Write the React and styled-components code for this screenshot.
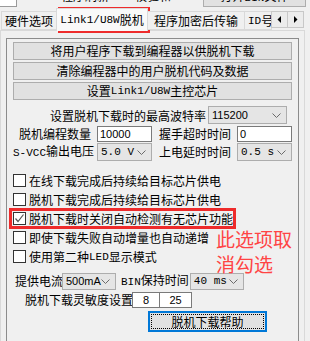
import React from 'react';
import styled, { createGlobalStyle } from 'styled-components';

const Global = createGlobalStyle`
  html, body { margin: 0; padding: 0; background: #f0f0f0; }
  body { font-family: "Noto Sans CJK SC", sans-serif; font-size: 12px; color: #000; }
  * { box-sizing: border-box; }
`;

const Screen = styled.div`
  position: relative;
  width: 310px;
  height: 341px;
  overflow: hidden;
  background: #f0f0f0;
`;

const Lat = styled.span`
  font-family: "Liberation Mono", monospace;
  font-size: 11px;
`;

/* ---------- top strip (cut off) ---------- */
const TopStrip = styled.div`
  height: 8px;
  display: flex;
  align-items: flex-end;
  overflow: hidden;
`;
const TopField = styled.div`
  width: 17px;
  height: 20px;
  margin-bottom: 1px;
  background: #fff;
  border: 1px solid #9a9a9a;
  border-left: none;
`;
const TopLabel = styled.div`
  height: 22px;
  line-height: 20px;
  margin-left: ${p => p.ml}px;
  white-space: nowrap;
`;
const TopButton = styled.div`
  margin-left: auto;
  margin-right: 4px;
  margin-bottom: 1px;
  width: 103px;
  height: 20px;
  line-height: 16px;
  text-align: center;
  background: #e1e1e1;
  border: 1px solid #adadad;
`;

/* ---------- tabs ---------- */
const TabBar = styled.div`
  height: 22px;
  display: flex;
  align-items: flex-end;
  padding-left: 2px;
  position: relative;
  z-index: 1;
`;
const Tab = styled.div`
  width: ${p => p.w}px;
  height: ${p => (p.active ? 23 : 19)}px;
  margin-bottom: ${p => (p.active ? -1 : 0)}px;
  margin-left: -1px;
  display: flex;
  align-items: center;
  justify-content: ${p => (p.left ? 'flex-start' : 'center')};
  padding-left: ${p => (p.left ? 3 : 0)}px;
  padding-top: ${p => (p.active ? 0 : 1)}px;
  white-space: nowrap;
  overflow: hidden;
  background: ${p => (p.active ? '#f9f9f9' : '#f0f0f0')};
  border: 1px solid #d9d9d9;
  border-bottom: ${p => (p.active ? 'none' : '1px solid #d9d9d9')};
  line-height: 16px;
`;
const ArrowGroup = styled.div`
  display: flex;
  margin-bottom: 2px;
  margin-left: -1px;
`;
const ArrowBtn = styled.div`
  width: 17px;
  height: 17px;
  display: flex;
  align-items: center;
  justify-content: center;
  background: #ececec;
  border: 1px solid #c8c8c8;
  margin-left: ${p => (p.second ? -1 : 0)}px;
`;

/* ---------- page & group ---------- */
const TabPage = styled.div`
  width: 305px;
  height: 320px;
  border: 1px solid #d9d9d9;
  padding: 7px 5px 0 5px;
`;
const GroupBox = styled.div`
  height: 320px;
  border: 1px solid #8c8c8c;
  padding: 3px 6px 0 6px;
`;
const ActionList = styled.div`
  display: flex;
  flex-direction: column;
`;
const PushButton = styled.div`
  height: 18px;
  margin-bottom: 2px;
  display: flex;
  align-items: center;
  justify-content: center;
  background: #e1e1e1;
  border: 1px solid #adadad;
  line-height: 16px;
  white-space: nowrap;
`;

const BaudRow = styled.div`
  margin-top: 4px;
  height: 18px;
  display: flex;
  align-items: center;
  justify-content: flex-end;
  padding-right: 5px;
  white-space: nowrap;
`;
const FormRow = styled.div`
  margin-top: ${p => p.mt}px;
  height: ${p => p.h}px;
  display: grid;
  grid-template-columns: 84px 55px 85px 55px;
  align-items: center;
`;
const RowLabel = styled.div`
  text-align: right;
  padding-right: 6px;
  white-space: nowrap;
  line-height: 16px;
`;
const TextBox = styled.div`
  width: ${p => (p.w ? `${p.w}px` : 'auto')};
  height: ${p => p.h || 16}px;
  margin-left: ${p => p.ml || 0}px;
  background: #fff;
  border: 1px solid #7a7a7a;
  font-family: "Liberation Sans", sans-serif;
  font-size: 11px;
  line-height: 14px;
  padding-left: ${p => (p.center ? 0 : 2)}px;
  text-align: ${p => (p.center ? 'center' : 'left')};
`;
const Combo = styled.div`
  width: ${p => (p.w ? `${p.w}px` : 'auto')};
  height: ${p => p.h || 18}px;
  margin-left: ${p => p.ml || 0}px;
  display: flex;
  align-items: center;
  justify-content: space-between;
  padding: 0 5px 0 3px;
  background: #e5e5e5;
  border: 1px solid #adadad;
  font-family: ${p => (p.mono ? '"Liberation Mono", monospace' : '"Liberation Sans", sans-serif')};
  font-size: 11px;
  white-space: pre;
`;

const CheckList = styled.div`
  margin-top: 10px;
  display: flex;
  flex-direction: column;
`;
const CheckRow = styled.div`
  height: 19px;
  display: flex;
  align-items: center;
  white-space: nowrap;
  line-height: 16px;
`;
const Box = styled.div`
  width: 13px;
  height: 13px;
  margin-right: 3px;
  background: #fff;
  border: 1px solid #333;
  display: flex;
  align-items: center;
  justify-content: center;
`;

const InlineRow = styled.div`
  margin-top: ${p => p.mt}px;
  height: ${p => p.h}px;
  display: flex;
  align-items: center;
  padding-left: ${p => p.pl}px;
  white-space: nowrap;
  line-height: 16px;
`;
const InlineLabel = styled.div`
  margin-left: ${p => p.ml || 0}px;
  width: ${p => (p.w ? `${p.w}px` : 'auto')};
`;
const HelpButton = styled.div`
  margin-top: 3px;
  margin-left: 135px;
  width: 119px;
  height: 21px;
  background: #e1e1e1;
  border: 2px solid #0078d7;
  padding: 1px;
`;
const FocusRect = styled.div`
  height: 100%;
  border: 1px dotted #000;
  display: flex;
  align-items: center;
  justify-content: center;
  line-height: 14px;
`;

/* ---------- overlays (annotation) ---------- */
const Highlight = styled.div`
  position: absolute;
  left: ${p => p.x}px;
  top: ${p => p.y}px;
  width: ${p => p.w}px;
  height: ${p => p.h}px;
  border: 3px solid #ee2b2b;
  pointer-events: none;
`;
const Note = styled.div`
  position: absolute;
  left: 216px;
  top: 226px;
  font-size: 19px;
  line-height: 25px;
  color: #ff4444;
  white-space: nowrap;
`;

const Chevron = () => (
  <svg width="9" height="5" viewBox="0 0 9 5">
    <polyline points="0.5,0.5 4.5,4.5 8.5,0.5" fill="none" stroke="#6a6a6a" strokeWidth="1" />
  </svg>
);
const Tick = () => (
  <svg width="11" height="11" viewBox="0 0 11 11">
    <polyline points="1.5,5.5 4,8.5 9.5,1.5" fill="none" stroke="#555" strokeWidth="1.2" />
  </svg>
);
const TriLeft = () => (
  <svg width="5" height="7" viewBox="0 0 5 7"><polygon points="4,0 4,7 0.5,3.5" fill="#000" /></svg>
);
const TriRight = () => (
  <svg width="5" height="7" viewBox="0 0 5 7"><polygon points="1,0 1,7 4.5,3.5" fill="#000" /></svg>
);

const checks = [
  { text: '在线下载完成后持续给目标芯片供电', checked: false },
  { text: '脱机下载完成后持续给目标芯片供电', checked: false },
  { text: '脱机下载时关闭自动检测有无芯片功能', checked: true },
  { text: '即使下载失败自动增量也自动递增', checked: false },
];

export default function App() {
  return (
    <Screen>
      <Global />
      <TopStrip>
        <TopField />
        <TopLabel ml={44}>程序刷新</TopLabel>
        <TopLabel ml={26}>校验和</TopLabel>
        <TopButton>打开<Lat>BIN</Lat>文件</TopButton>
      </TopStrip>

      <TabBar>
        <Tab w={56} left>硬件选项</Tab>
        <Tab w={92} active><Lat>Link1/U8W</Lat>脱机</Tab>
        <Tab w={98}>程序加密后传输</Tab>
        <Tab w={28} left><Lat>ID</Lat>号</Tab>
        <ArrowGroup>
          <ArrowBtn><TriLeft /></ArrowBtn>
          <ArrowBtn second><TriRight /></ArrowBtn>
        </ArrowGroup>
      </TabBar>

      <TabPage>
        <GroupBox>
          <ActionList>
            <PushButton>将用户程序下载到编程器以供脱机下载</PushButton>
            <PushButton>清除编程器中的用户脱机代码及数据</PushButton>
            <PushButton>设置<Lat>Link1/U8W</Lat>主控芯片</PushButton>
          </ActionList>

          <BaudRow>
            设置脱机下载时的最高波特率
            <Combo w={79} ml={2}>115200<Chevron /></Combo>
          </BaudRow>

          <FormRow mt={2} h={16}>
            <RowLabel>脱机编程数量</RowLabel>
            <TextBox>10000</TextBox>
            <RowLabel>握手超时时间</RowLabel>
            <TextBox>0</TextBox>
          </FormRow>
          <FormRow mt={1} h={18}>
            <RowLabel><Lat>S-VCC</Lat>输出电压</RowLabel>
            <Combo mono>5.0 V<Chevron /></Combo>
            <RowLabel>上电延时时间</RowLabel>
            <Combo mono>0.5 s<Chevron /></Combo>
          </FormRow>

          <CheckList>
            {checks.map(c => (
              <CheckRow key={c.text}>
                <Box>{c.checked && <Tick />}</Box>
                {c.text}
              </CheckRow>
            ))}
            <CheckRow>
              <Box />
              使用第二种<Lat>LED</Lat>显示模式
            </CheckRow>
          </CheckList>

          <InlineRow mt={6} h={18} pl={2}>
            <InlineLabel w={48}>提供电流</InlineLabel>
            <Combo w={54} h={17} ml={-1}>500mA<Chevron /></Combo>
            <InlineLabel ml={5}><Lat>BIN</Lat>保持时间</InlineLabel>
            <Combo w={54} h={17} ml={1} mono>40 ms<Chevron /></Combo>
          </InlineRow>

          <InlineRow mt={2} h={16} pl={12}>
            <InlineLabel w={107}>脱机下载灵敏度设置</InlineLabel>
            <TextBox w={28} h={16} center>8</TextBox>
            <TextBox w={33} h={16} ml={-1} center>25</TextBox>
          </InlineRow>

          <HelpButton>
            <FocusRect>脱机下载帮助</FocusRect>
          </HelpButton>
        </GroupBox>
      </TabPage>

      <Highlight x={58} y={7} w={92} h={26} />
      <Highlight x={9} y={208} w={227} h={21} />
      <Note>此选项取<br />消勾选</Note>
    </Screen>
  );
}
